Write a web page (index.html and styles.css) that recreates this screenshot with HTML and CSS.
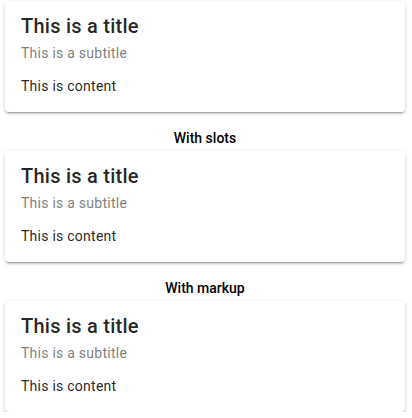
FILE: index.html
```html
<!DOCTYPE html>
<html>
<head>
<meta charset="utf-8">
<link rel="stylesheet" href="styles.css">
</head>
<body>
<div class="page">
  <div class="card">
    <div class="card-title">This is a title</div>
    <div class="card-subtitle">This is a subtitle</div>
    <div class="card-text">This is content</div>
  </div>
  <div class="label">With slots</div>
  <div class="card">
    <div class="card-title">This is a title</div>
    <div class="card-subtitle">This is a subtitle</div>
    <div class="card-text">This is content</div>
  </div>
  <div class="label">With markup</div>
  <div class="card">
    <div class="card-title">This is a title</div>
    <div class="card-subtitle">This is a subtitle</div>
    <div class="card-text">This is content</div>
  </div>
</div>
</body>
</html>
```
FILE: styles.css
```css
html, body {
  margin: 0;
  padding: 0;
  background: #fff;
}
body {
  font-family: Roboto, "Noto Sans", sans-serif;
  color: rgba(0, 0, 0, 0.87);
}
.page {
  display: flex;
  flex-direction: column;
  padding: 1px 7px 0 5px;
}
.card {
  width: 400px;
  box-sizing: border-box;
  background: #fff;
  border-radius: 4px;
  box-shadow: 0 3px 1px -2px rgba(0,0,0,.2), 0 2px 2px 0 rgba(0,0,0,.14), 0 1px 5px 0 rgba(0,0,0,.12);
  padding: 11px 16px 16px;
}
.card-title {
  font-size: 20px;
  font-weight: 500;
  line-height: 28px;
  letter-spacing: 0.0125em;
  color: rgba(0, 0, 0, 0.87);
}
.card-subtitle {
  margin-top: 3px;
  font-size: 14px;
  line-height: 20px;
  letter-spacing: 0.0178571429em;
  color: rgba(0, 0, 0, 0.87);
  opacity: 0.6;
}
.card-text {
  margin-top: 13px;
  font-size: 14px;
  line-height: 20px;
  letter-spacing: 0.0178571429em;
  color: rgba(0, 0, 0, 0.87);
}
.label {
  margin: 16px 0 3px;
  text-align: center;
  font-size: 14px;
  font-weight: 500;
  line-height: 20px;
  color: #000;
}
```
